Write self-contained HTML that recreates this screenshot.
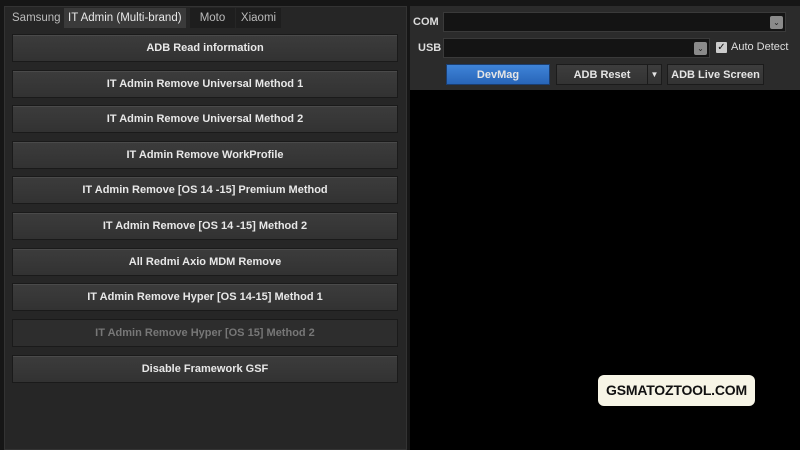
<!DOCTYPE html>
<html><head><style>
*{margin:0;padding:0;box-sizing:border-box}
body{width:800px;height:450px;background:#161616;font-family:"Liberation Sans",sans-serif;position:relative;overflow:hidden;color:#ddd}
.a{position:absolute}
.lp{left:4px;top:6px;width:403px;height:444px;background:#262626;border:1px solid #333}
.tab{top:8px;height:20px;font-size:11.5px;line-height:20px;color:#bbb;padding:0 4px}
.btn{left:12px;width:386px;height:28px;background:linear-gradient(#3c3c3c,#323232);border:1px solid #1a1a1a;box-shadow:inset 0 1px 0 #4a4a4a;font-size:11px;font-weight:bold;color:#e8e8e8;text-align:center;line-height:27px}
.rp{left:410px;top:6px;width:390px;height:84px;background:#2b2b2b}
.cb{background:#141414;border:1px solid #3a3a3a;height:20px}
.dd{width:13px;height:13px;background:#8a8a8a;border-radius:2px;top:3px;color:#222;font-size:8px;text-align:center;line-height:13px}
.lb{font-size:11px;font-weight:bold;color:#ddd}
.sb{top:64px;height:21px;font-size:11px;font-weight:bold;text-align:center;line-height:20px;background:linear-gradient(#3d3d3d,#333);border:1px solid #1b1b1b;color:#e5e5e5}
</style></head><body>
<div class="a lp"></div>
<div class="a tab" style="left:8px">Samsung</div>
<div class="a tab" style="left:64px;background:#3a3a3a;color:#e8e8e8">IT Admin (Multi-brand)</div>
<div class="a tab" style="left:190px;background:#1e1e1e;width:45px;text-align:center">Moto</div>
<div class="a tab" style="left:236px;background:#1e1e1e;width:45px;text-align:center">Xiaomi</div>
<div class="a btn" style="top:34px">ADB Read information</div>
<div class="a btn" style="top:70px">IT Admin Remove Universal Method 1</div>
<div class="a btn" style="top:105px">IT Admin Remove Universal Method 2</div>
<div class="a btn" style="top:141px">IT Admin Remove WorkProfile</div>
<div class="a btn" style="top:176px">IT Admin Remove [OS 14 -15] Premium Method</div>
<div class="a btn" style="top:212px">IT Admin Remove [OS 14 -15] Method 2</div>
<div class="a btn" style="top:248px">All Redmi Axio MDM Remove</div>
<div class="a btn" style="top:283px">IT Admin Remove Hyper [OS 14-15] Method 1</div>
<div class="a btn" style="top:319px;color:#777;background:#2d2d2d;box-shadow:none">IT Admin Remove Hyper [OS 15] Method 2</div>
<div class="a btn" style="top:355px">Disable Framework GSF</div>
<div class="a rp"></div>
<div class="a" style="left:410px;top:90px;width:390px;height:360px;background:#000"></div>
<div class="a lb" style="left:413px;top:16px">COM</div>
<div class="a cb" style="left:443px;top:12px;width:343px"><div class="a dd" style="right:2px">&#8964;</div></div>
<div class="a lb" style="left:418px;top:42px">USB</div>
<div class="a cb" style="left:443px;top:38px;width:267px"><div class="a dd" style="right:2px">&#8964;</div></div>
<div class="a" style="left:716px;top:42px;width:11px;height:11px;background:#ccc;border-radius:1px;color:#111;font-size:10px;line-height:11px;text-align:center">&#10003;</div>
<div class="a" style="left:731px;top:41px;font-size:11px;color:#ddd">Auto Detect</div>
<div class="a sb" style="left:446px;width:104px;background:linear-gradient(#3f84d8,#2865b8);border-color:#1b3e70">DevMag</div>
<div class="a sb" style="left:556px;width:92px">ADB Reset</div>
<div class="a sb" style="left:647px;width:15px;font-size:8px">&#9660;</div>
<div class="a sb" style="left:667px;width:97px">ADB Live Screen</div>
<div class="a" style="left:598px;top:375px;width:157px;height:31px;background:#f7f5e6;border-radius:6px;color:#111;font-weight:bold;font-size:14px;text-align:center;line-height:31px;letter-spacing:-0.2px">GSMATOZTOOL.COM</div>
</body></html>
